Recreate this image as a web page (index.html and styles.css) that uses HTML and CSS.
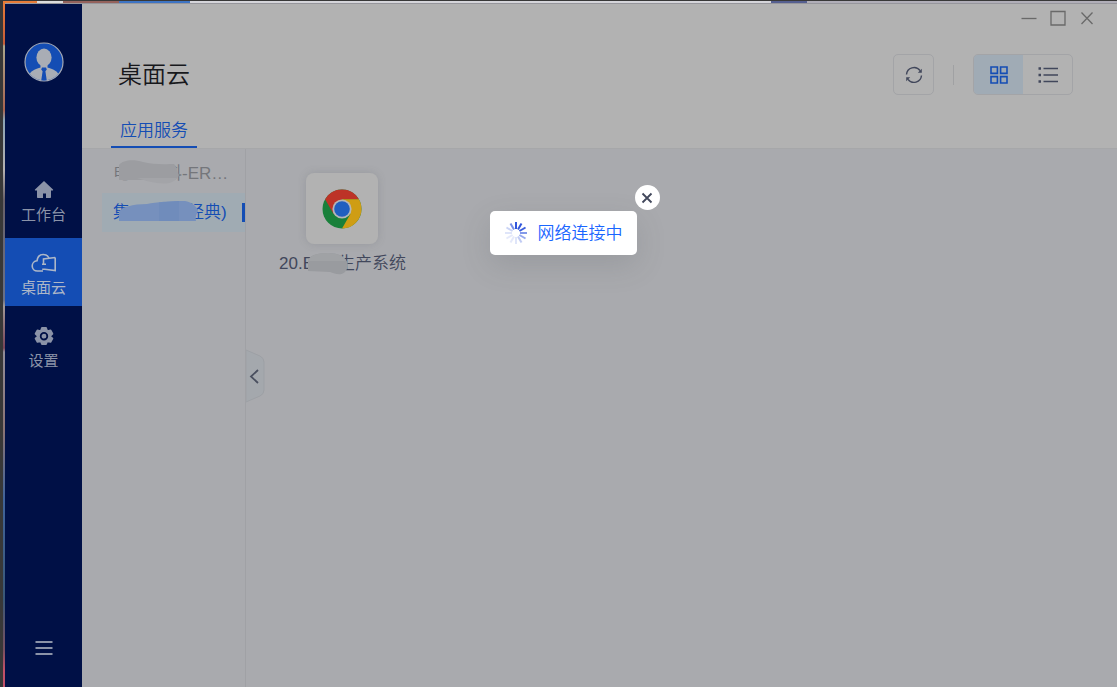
FILE: index.html
```html
<!DOCTYPE html>
<html lang="zh-CN">
<head>
  <meta charset="UTF-8">
  <meta name="viewport" content="width=device-width, initial-scale=1.0">
  <title>桌面云</title>
  <link rel="stylesheet" href="styles.css">
</head>
<body>
  <div class="window">
    <aside class="sidebar">
      <svg class="avatar" viewBox="0 0 40 40" aria-hidden="true">
        <defs><clipPath id="face"><circle cx="20" cy="20" r="18.5"/></clipPath></defs>
        <circle cx="20" cy="20" r="19" fill="#144db4" stroke="#a3a9b6" stroke-width="1.2"/>
        <g clip-path="url(#face)" fill="#a9adb5">
          <ellipse cx="20" cy="15.5" rx="7.6" ry="9"/>
          <path d="M16.500 21h7v5h-7z"/>
          <path d="M5 40V34c1-5 6-7 12-8.500h6c6 1.500 11 3.500 12 8.500v6z"/>
          <path d="M18 25.500h4l.8 2-1.400 1.800L23 40h-6l1.600-10.700-1.400-1.800z" fill="#144db4"/>
        </g>
      </svg>

      <nav class="nav">
        <a class="nav-item" href="#">
          <svg width="20" height="20" viewBox="0 0 20 20" fill="currentColor"><path d="M10 1 19 9.500c.4.5 0 1-.5 1H17V17c0 .6-.4 1-1 1h-4v-4.500H9V18H4c-.6 0-1-.4-1-1v-6.500H1.500c-.5 0-.9-.5-.5-1z"/></svg>
          <span>工作台</span>
        </a>
        <a class="nav-item active" href="#">
          <svg width="26" height="20" viewBox="0 0 26 20" fill="none" stroke="currentColor" stroke-width="1.6"><path d="M12 18H6.500C3.500 18 1.200 15.800 1.200 13s2-5 4.800-5.200C6.500 4 9 1.500 12.200 1.500c2.600 0 4.800 1.500 5.800 3.500"/><path d="M24.200 4.500v13l-10.500-1.300h-2.500M24.200 4.500 12.500 6v5.500M15 11.200h-4"/></svg>
          <span>桌面云</span>
        </a>
        <a class="nav-item" href="#">
          <svg width="20" height="20" viewBox="0 0 20 20"><path fill="currentColor" stroke="currentColor" stroke-width="2" stroke-linejoin="round" d="M8 2h4l.7 2.400 1.300.8 2.500-.7 1.800 3.300L16.500 9.500v1.500l1.800 1.500-1.800 3.300-2.500-.6-1.300.8L12 18H8l-.7-2-1.300-.8-2.500.6-1.800-3.300L3.500 11V9.500L1.700 7.800l1.800-3.300 2.500.7 1.300-.8z"/><circle cx="10" cy="10.200" r="3.300" fill="#8b93a8" stroke="#001046" stroke-width="1.800"/></svg>
          <span>设置</span>
        </a>
      </nav>

      <button class="menu-btn" type="button" aria-label="菜单">
        <svg width="18" height="16" viewBox="0 0 18 16" stroke="currentColor" stroke-width="2"><path d="M0.500 2h17M0.500 8h17M0.500 14h17"/></svg>
      </button>
    </aside>

    <main class="main">
      <header class="header">
        <div class="window-controls">
          <button type="button" aria-label="最小化"><svg width="16" height="16" viewBox="0 0 16 16"><path d="M0.500 8.500h15"/></svg></button>
          <button type="button" aria-label="最大化"><svg width="16" height="16" viewBox="0 0 16 16"><path d="M1 1.500h14v13.500H1z"/></svg></button>
          <button type="button" aria-label="关闭"><svg width="16" height="16" viewBox="0 0 16 16"><path d="M2.500 2.500 13.500 14M13.500 2.500 2.500 14"/></svg></button>
        </div>

        <div class="title-row">
          <h1>桌面云</h1>
          <div class="tools">
            <button class="refresh" type="button" aria-label="刷新">
              <svg width="18" height="18" viewBox="0 0 18 18" fill="none" stroke="currentColor" stroke-width="1.400"><path d="M1.500 8.500a7.500 7.500 0 0 1 13.600-3.800M16.500 9.500A7.500 7.500 0 0 1 3 13.300"/><path d="M16.800 2.800v4h-4zM1.200 15.200v-4h4z" fill="currentColor" stroke="none"/></svg>
            </button>
            <span class="divider"></span>
            <div class="view-switch">
              <button class="selected" type="button" aria-label="网格视图">
                <svg width="20" height="20" viewBox="0 0 20 20" fill="none" stroke="currentColor" stroke-width="1.600"><path d="M2 2h6.400v6.400H2zM11.600 2H18v6.400h-6.400zM2 11.600h6.400V18H2zM11.600 11.600H18V18h-6.400z"/></svg>
              </button>
              <button type="button" aria-label="列表视图">
                <svg width="20" height="18" viewBox="0 0 20 18" stroke="currentColor" stroke-width="1.500"><path d="M5.500 2.500H20M5.500 9H20M5.500 15.500H20"/><path d="M0.500 2.500H3M0.500 9H3M0.500 15.500H3" stroke-width="2.400"/></svg>
              </button>
            </div>
          </div>
        </div>

        <div class="tabs"><a class="tab" href="#">应用服务</a></div>
      </header>

      <div class="content">
        <div class="groups">
          <a class="group" href="#">
            <span>电</span>
            <svg class="smudge smudge-group" viewBox="0 0 60 24"><path d="M0 5C4 0 14-1 24 2s26 2 31 2c3 3 3 8 5 11-1 3-3 4-4 5H0z" fill="#9c9da1"/><path d="M18 18h40c-4 6-12 6-20 5s-13-3-20-5z" fill="#a3a4a8"/></svg>
            <span>科-ER…</span>
          </a>
          <a class="group current" href="#">
            <span>集</span>
            <svg class="smudge smudge-current" viewBox="0 0 80 20"><path d="M0 11C2 6 14 3 28 3 38 1 50 0 66 0c6 1 12 5 13 10-1 3-3 5-2 10H0z" fill="#7690bd"/><path d="M40 1.500 60 0v20H40z" fill="#708cbb"/></svg>
            <span>经典)</span>
          </a>
        </div>

        <button class="collapse" type="button" aria-label="收起">
          <svg width="19" height="54" viewBox="0 0 19 54" fill="none"><path d="M0 1 14 7q4 2 4 6v28q0 4-4 6L0 53z" fill="#a4a8ad" stroke="#9da0a5"/><path d="m12 21-7 6.500 7 6.500" stroke="#4a4f5f" stroke-width="1.800"/></svg>
        </button>

        <div class="apps">
          <a class="app" href="#">
            <span class="app-icon">
              <svg width="40" height="40" viewBox="0 0 40 40">
                <circle cx="20" cy="20" r="19.500" fill="#19803a"/>
                <path d="M3.100 10.300A19.500 19.500 0 0 1 36.900 10.300H20L11.600 24.900z" fill="#bd3327"/>
                <path d="M36.900 10.300A19.500 19.500 0 0 1 20 39.500L28.400 24.900 20 10.300z" fill="#cf9d14"/>
                <circle cx="20" cy="20" r="9.600" fill="#b5b6b8"/>
                <circle cx="20" cy="20" r="7.800" fill="#205fc0"/>
              </svg>
            </span>
            <span class="app-name">
              <span>20.E</span>
              <svg class="smudge smudge-app" viewBox="0 0 40 22"><path d="M0 7C2 2 10 0 20 0c9 0 16 3 18 7 3 4 2 9-1 12-4 4-10 2-15 0L0 18z" fill="#999b9f"/><path d="M0 8C2 2 10 0 20 0c9 0 16 3 18 8z" fill="#a0a2a5"/></svg>
              <span>生产系统</span>
            </span>
          </a>
        </div>
      </div>
    </main>

    <div class="overlay">
      <div class="loading" role="status">
        <svg width="24" height="24" viewBox="0 0 24 24" stroke="#3156dc" stroke-width="2">
          <path d="M12 1v7"/>
          <path d="M12 1v7" transform="rotate(30 12 12)"/>
          <path d="M12 1v7" transform="rotate(60 12 12)" opacity=".95"/>
          <path d="M12 1v7" transform="rotate(90 12 12)" opacity=".6"/>
          <path d="M12 1v7" transform="rotate(120 12 12)" opacity=".5"/>
          <path d="M12 1v7" transform="rotate(150 12 12)" opacity=".3"/>
          <path d="M12 1v7" transform="rotate(180 12 12)" opacity=".15"/>
          <path d="M12 1v7" transform="rotate(210 12 12)" opacity=".12"/>
          <path d="M12 1v7" transform="rotate(240 12 12)" opacity=".12"/>
          <path d="M12 1v7" transform="rotate(270 12 12)" opacity=".15"/>
          <path d="M12 1v7" transform="rotate(300 12 12)" opacity=".25"/>
          <path d="M12 1v7" transform="rotate(330 12 12)" opacity=".65"/>
        </svg>
        <span class="loading-text">网络连接中</span>
        <button class="close" type="button" aria-label="取消连接">
          <svg width="12" height="12" viewBox="0 0 12 12" stroke="currentColor" stroke-width="1.800"><path d="m1.500 1.500 9 9M10.500 1.500l-9 9"/></svg>
        </button>
      </div>
    </div>
  </div>
</body>
</html>
```
FILE: styles.css
```css
* {
  box-sizing: border-box;
}

body {
  margin: 0;
  min-height: 100vh;
  display: flex;
  padding: 4px 0 0 5px;
  font-family: "Liberation Sans", "Noto Sans CJK SC", sans-serif;
  font-size: 17px;
  font-weight: 350;
  /* desktop showing around the window */
  background:
    linear-gradient(#383838, #383838) 0 0 / 100% 1px no-repeat,
    linear-gradient(#383838, #383838) 0 0 / 3px 100% no-repeat,
    linear-gradient(#96969c, #96969c) 5px 3px / 100% 1px no-repeat,
    linear-gradient(90deg, #e87c38 37px, #dcdcdc 37px 63px, #94625c 63px 119px, #3d74c4 119px 190px, #d5d5da 190px 771px, #555f90 771px 807px, #b0aeb8 807px) 0 1px / 100% 2px no-repeat,
    linear-gradient(#e87c38, #c45c38 44px, #aaa68c 46px, #a86450 110px, #8ca4b4 120px, #b4b0b0 170px, #686068 200px, #687088 300px, #a09896 306px, #784458 348px, #908c98 352px, #8a7474 430px, #40639a 500px, #3a5876 600px, #785060 650px, #c05068 670px);
}

a {
  color: inherit;
  text-decoration: none;
}

button {
  display: flex;
  align-items: center;
  justify-content: center;
  padding: 0;
  border: none;
  background: none;
  color: inherit;
  cursor: pointer;
}

.window {
  position: relative;
  flex: 1;
  display: flex;
}

/* sidebar */
.sidebar {
  width: 77px;
  padding: 38px 0 31px;
  display: flex;
  flex-direction: column;
  align-items: center;
  background: #001046;
  color: #8b93a8;
}

.avatar {
  width: 40px;
  height: 40px;
}

.nav {
  width: 100%;
  flex: 1;
  margin-top: 83px;
  display: flex;
  flex-direction: column;
  gap: 5px;
}

.nav-item {
  height: 68px;
  padding-top: 15px;
  display: flex;
  flex-direction: column;
  align-items: center;
  gap: 4px;
  font-size: 15px;
  line-height: 22px;
  font-weight: 400;
}

.nav-item.active {
  background: #144db4;
  color: #adb7c8;
}

/* main area */
.main {
  flex: 1;
  min-width: 0;
  display: flex;
  flex-direction: column;
  background: #a9aaae;
}

.header {
  background: #b2b2b2;
  border-bottom: 1px solid #a6a7a9;
}

.window-controls {
  display: flex;
  justify-content: flex-end;
  gap: 13px;
  padding: 6px 22px 0 0;
}

.window-controls svg {
  fill: none;
  stroke: #696969;
  stroke-width: 1.3;
}

.title-row {
  display: flex;
  align-items: center;
  justify-content: space-between;
  padding: 28px 44px 0 36px;
}

h1 {
  margin: 0;
  font-size: 24px;
  line-height: 40px;
  font-weight: 350;
  color: #17181c;
}

.tools {
  display: flex;
  align-items: center;
  color: #41475b;
}

.refresh {
  width: 41px;
  height: 41px;
  border: 1px solid #a3a4a7;
  border-radius: 5px;
}

.divider {
  width: 1px;
  height: 20px;
  margin: 0 19px;
  background: #a0a1a3;
}

.view-switch {
  display: flex;
  height: 41px;
  border: 1px solid #a3a4a7;
  border-radius: 5px;
  overflow: hidden;
}

.view-switch button {
  width: 49px;
}

.view-switch .selected {
  background: #a0abb5;
  color: #144db4;
}

.tabs {
  display: flex;
  padding: 21px 29px 0;
}

.tab {
  padding: 0 9px;
  line-height: 30px;
  border-bottom: 2px solid #144db4;
  color: #144db4;
}

.content {
  flex: 1;
  display: flex;
}

.groups {
  width: 164px;
  padding: 5px 0 0 20px;
  border-right: 1px solid #a0a1a5;
}

.group {
  display: flex;
  align-items: center;
  height: 39px;
  padding: 0 0 4px 11px;
  white-space: nowrap;
  color: #74767b;
}

.current {
  position: relative;
  background: #a0abb3;
  color: #144db4;
}

.current::after {
  content: "";
  position: absolute;
  right: 0;
  top: 10px;
  width: 3px;
  height: 19px;
  background: #144db4;
}

/* blurred-out names */
.smudge {
  position: relative;
  flex: none;
}

.smudge-group {
  width: 60px;
  height: 24px;
  margin: 0 -14px 0 -11px;
}

.smudge-current {
  width: 80px;
  height: 20px;
  margin: 0 -12px 0 -11px;
}

.smudge-app {
  width: 40px;
  height: 22px;
  margin: 0 -10px 0 -6px;
}

.collapse {
  align-self: flex-start;
  margin-top: 200px;
}

.apps {
  flex: 1;
  padding: 24px 14px;
  display: flex;
  align-items: flex-start;
}

.app {
  display: flex;
  flex-direction: column;
  align-items: center;
  gap: 8px;
  color: #41475b;
}

.app-icon {
  width: 72px;
  height: 71px;
  display: flex;
  align-items: center;
  justify-content: center;
  border-radius: 8px;
  background: #b2b2b2;
  box-shadow: 0 0 8px rgba(80, 84, 96, 0.2);
}

.app-name {
  display: flex;
  align-items: center;
  line-height: 24px;
  white-space: nowrap;
}

/* connecting popup */
.overlay {
  position: absolute;
  inset: 0;
  display: flex;
  align-items: flex-start;
  justify-content: center;
  padding: 207px 0 0 4px;
}

.loading {
  position: relative;
  display: flex;
  align-items: center;
  gap: 10px;
  height: 44px;
  padding: 0 14px;
  border-radius: 5px;
  background: #fff;
  color: #1a66ff;
  box-shadow: 0 10px 30px rgba(70, 72, 78, 0.16);
}

.loading-text {
  padding-bottom: 4px;
}

.close {
  position: absolute;
  right: -23px;
  top: -26px;
  width: 25px;
  height: 25px;
  border-radius: 50%;
  background: #fff;
  color: #41475b;
}
```
